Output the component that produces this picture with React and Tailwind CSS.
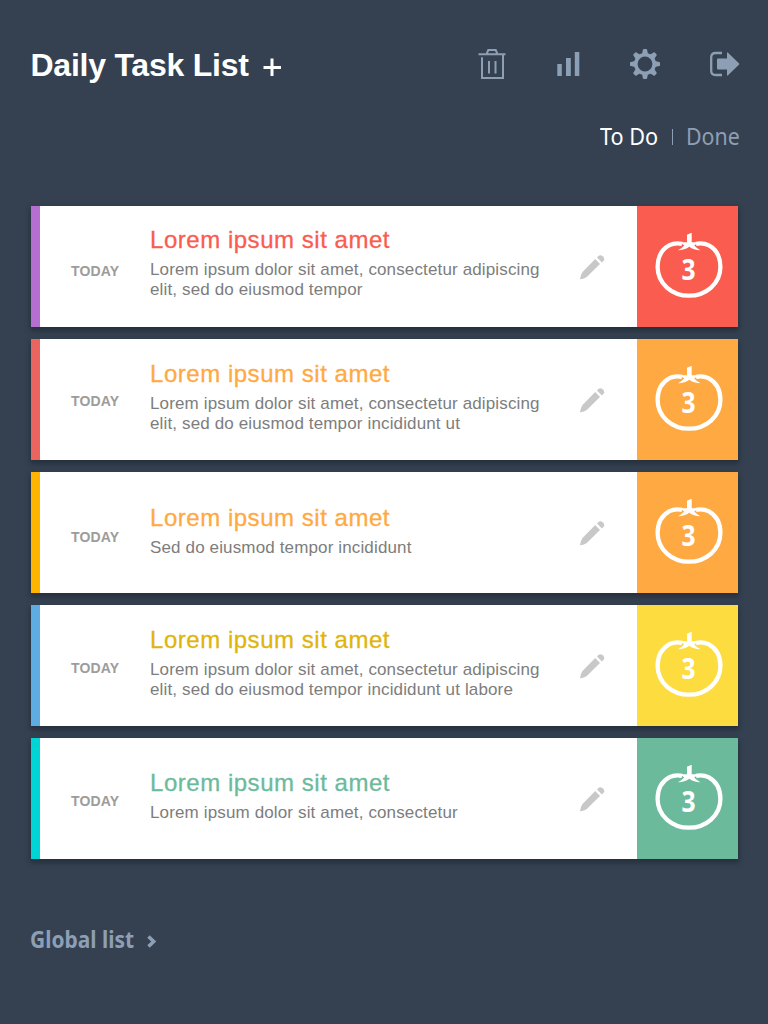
const TASKS = [
  { stripe: "bg-[#b56fd0]", box: "bg-[#fa5c4f]", title: "text-[#fa5c4f]", pad: "pt-[19px]", day: "pt-[55px]", lines: ["Lorem ipsum dolor sit amet, consectetur adipiscing", "elit, sed do eiusmod tempor"] },
  { stripe: "bg-[#ea6560]", box: "bg-[#ffa942]", title: "text-[#ffa942]", pad: "pt-[20px]", day: "pt-[52px]", lines: ["Lorem ipsum dolor sit amet, consectetur adipiscing", "elit, sed do eiusmod tempor incididunt ut"] },
  { stripe: "bg-[#ffb400]", box: "bg-[#ffa942]", title: "text-[#ffa942]", pad: "pt-[31px]", day: "pt-[55px]", lines: ["Sed do eiusmod tempor incididunt"] },
  { stripe: "bg-[#5dade2]", box: "bg-[#fddc40]", title: "text-[#dfb50c]", pad: "pt-[20px]", day: "pt-[53px]", lines: ["Lorem ipsum dolor sit amet, consectetur adipiscing", "elit, sed do eiusmod tempor incididunt ut labore"] },
  { stripe: "bg-[#00d5d5]", box: "bg-[#6cba9c]", title: "text-[#6cba9c]", pad: "pt-[30px]", day: "pt-[53px]", lines: ["Lorem ipsum dolor sit amet, consectetur"] },
];

function Trash() {
  return (
    <svg width="28" height="32" viewBox="0 0 28 32" fill="none" stroke="currentColor" strokeWidth="2">
      <path d="M0.500 6.300H27.500M8.800 5.500L10.300 2H17.700L19.200 5.500M4 9.300V30H25V6M11 13V25.500M17.500 13V25.500" />
    </svg>
  );
}

function Bars() {
  return (
    <svg width="24" height="24" viewBox="0 0 24 24" fill="currentColor">
      <path d="M1.300 12H5.800V24H1.300ZM10 6H14.800V24H10ZM18.800 0H23.300V24H18.800Z" />
    </svg>
  );
}

function Gear() {
  return (
    <svg width="30" height="30" viewBox="0 0 30 30" fill="none" stroke="currentColor">
      <circle cx="15" cy="15" r="9.200" strokeWidth="3.600" />
      <g fill="currentColor" stroke="none">
        {[0, 45, 90, 135, 180, 225, 270, 315].map((a) => (
          <path key={a} d="M11.800 6L12.900 0.800Q13 0 13.800 0H16.200Q17 0 17.100 0.800L18.200 6Z" transform={`rotate(${a} 15 15)`} />
        ))}
      </g>
    </svg>
  );
}

function Exit() {
  return (
    <svg width="30" height="26" viewBox="0 0 30 26" fill="none">
      <path d="M12 2H5.500Q1.200 2 1.200 6.300V19.700Q1.200 24 5.500 24H12" stroke="currentColor" strokeWidth="2.300" />
      <path d="M8 7.500H17V2Q17 0.800 18 1.700L28.900 12.200Q29.700 13 28.900 13.800L18 24.300Q17 25.200 17 24V18.500H8Q7 18.500 7 17.500V8.500Q7 7.500 8 7.500Z" fill="currentColor" />
    </svg>
  );
}

function Pencil() {
  return (
    <svg width="25" height="25" viewBox="0 0 25 25" fill="#c8c8c8">
      <path d="M15.200 4.100L20 8.900L7.300 21.400Q5.900 22.900 0.700 24.200Q0 24.400 0.100 23.700Q1.200 18.500 2.500 16.900Z" />
      <path d="M17 2.600L18.400 1.100Q20.200-0.500 22.700 1.300Q25.500 4 23.300 6.100L21.900 7.400Z" />
    </svg>
  );
}

function Tomato() {
  return (
    <svg width="68" height="66" viewBox="0 0 68 66">
      <path d="M27 10.800C22.500 9.800 18 10.400 14.500 12.200C6.500 16.500 2.600 25 2.600 34C2.600 50.500 17 62.700 34 62.700C51 62.700 65.400 50.500 65.400 34C65.400 25 61.500 16.500 53.500 12.200C50 10.400 45.500 9.800 41 10.800" fill="none" stroke="#fff" strokeWidth="4.300" />
      <path d="M32 1.800L36.700 -0.300V9.300Q40.500 9.300 43 8.700Q41.500 11.400 39.300 12.400Q42 15.500 45.500 17.300Q38.500 17 34.300 13.800Q30 17 23 17.300Q26.500 15.500 29.200 12.400Q27 11.400 25.500 8.700Q28 9.300 32 9.300Z" fill="#fff" />
    </svg>
  );
}

function TaskRow({ task }) {
  return (
    <li className="flex h-[121px] w-[707px] bg-white shadow-[0_3px_5px_1px_rgba(20,28,38,0.45)]">
      <div className={`w-[9px] shrink-0 ${task.stripe}`} />
      <div className={`w-[110px] shrink-0 pl-[31px] text-[14px] leading-[20px] font-bold tracking-[0.15px] text-[#9c9c9c] ${task.day}`}>TODAY</div>
      <div className={`w-[421px] shrink-0 ${task.pad}`}>
        <h2 className={`text-[24px] leading-[30px] tracking-[0.53px] whitespace-nowrap [-webkit-text-stroke:0.3px_currentColor] ${task.title}`}>Lorem ipsum sit amet</h2>
        <div className="pt-[5px] text-[17px] leading-[20px] tracking-[0.14px] whitespace-nowrap text-[#7d7d7d]">
          {task.lines.map((line) => (
            <p key={line}>{line}</p>
          ))}
        </div>
      </div>
      <button className="flex h-full w-[66px] shrink-0 items-center pt-[2px] pl-[9px]" aria-label="Edit">
        <Pencil />
      </button>
      <div className={`relative flex w-[101px] shrink-0 justify-center pt-[27px] pl-[2px] ${task.box}`}>
        <Tomato />
        <span className="absolute top-[47px] left-[1px] w-full scale-x-[0.85] text-center font-['Open_Sans',sans-serif] text-[29px] leading-[32px] font-bold text-white">3</span>
      </div>
    </li>
  );
}

export default function App() {
  return (
    <main className="h-[1024px] w-[768px] overflow-hidden bg-[#354151] font-['Liberation_Sans',sans-serif]">
      <header className="flex h-[100px] items-start justify-between pr-[28px] pl-[30px] text-[#8d9fb4]">
        <div className="flex pt-[45px] text-white">
          <h1 className="w-[233px] pl-[0.500px] text-[32px] leading-[40px] font-bold tracking-[-0.24px] whitespace-nowrap">Daily Task List</h1>
          <svg className="mt-[13px]" width="18" height="18" viewBox="0 0 18 18" fill="currentColor">
            <path d="M7.500 0.500H10.500V8H18V11H10.500V18H7.500V11H0.500V8H7.500Z" />
          </svg>
        </div>
        <nav className="mt-[48px] flex h-[32px] w-[262px] items-center justify-between">
          <Trash />
          <Bars />
          <Gear />
          <Exit />
        </nav>
      </header>
      <div className="flex h-[106px] items-start pt-[20px] pl-[600px] font-['Noto_Sans',sans-serif] text-[23px] leading-[32px]">
        <span className="w-[72px] origin-left scale-x-[0.94] whitespace-nowrap text-white">To Do</span>
        <span className="mt-[9px] h-[16px] w-px bg-[#8d9fb4]" />
        <span className="ml-[13px] origin-left scale-x-[0.93] text-[#8d9fb4]">Done</span>
      </div>
      <ul className="flex flex-col gap-[12px] pl-[31px]">
        {TASKS.map((task, i) => (
          <TaskRow key={i} task={task} />
        ))}
      </ul>
      <footer className="flex items-start pt-[64px] pl-[30px] text-[#8d9fb4]">
        <a className="w-[117px] origin-left scale-x-[0.91] font-['Noto_Sans',sans-serif] text-[23px] leading-[32px] font-bold whitespace-nowrap">Global list</a>
        <svg className="mt-[12px]" width="10" height="13" viewBox="0 0 10 13" fill="none" stroke="currentColor" strokeWidth="3.500">
          <path d="M1.500 1.500L6.700 6.500L1.500 11.500" />
        </svg>
      </footer>
    </main>
  );
}
